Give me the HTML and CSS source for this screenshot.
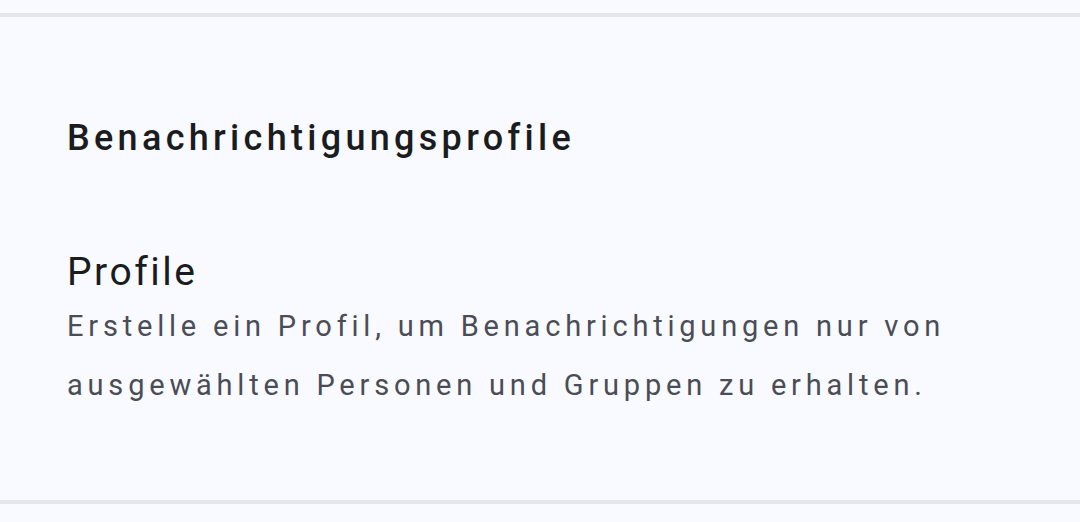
FILE: index.html
```html
<!DOCTYPE html>
<html lang="de">
<head>
<meta charset="utf-8">
<link rel="stylesheet" href="styles.css">
</head>
<body>
<div class="page">
  <div class="spacer-top"></div>
  <div class="divider"></div>
  <section class="section">
    <h2 class="section-title">Benachrichtigungsprofile</h2>
    <div class="item">
      <div class="item-title">Profile</div>
      <div class="item-summary">Erstelle ein Profil, um Benachrichtigungen nur von ausgewählten Personen und Gruppen zu erhalten.</div>
    </div>
  </section>
  <div class="divider"></div>
</div>
</body>
</html>
```
FILE: styles.css
```css
html, body {
  margin: 0;
  padding: 0;
  background: #f9faff;
}
body {
  font-family: Roboto, "Noto Sans", sans-serif;
  width: 1080px;
  height: 522px;
  overflow: hidden;
}
.page {
  display: flex;
  flex-direction: column;
}
.spacer-top {
  height: 13px;
}
.divider {
  height: 4px;
  background: #e5e6eb;
}
.section {
  height: 483px;
  box-sizing: border-box;
  padding: 0 40px 0 67px;
  display: flex;
  flex-direction: column;
}
.section-title {
  margin: 0;
  margin-top: 96px;
  font-size: 36px;
  line-height: 50px;
  font-weight: 500;
  color: #1b1c20;
  letter-spacing: 4.3px;
}
.item {
  margin-top: 84px;
}
.item-title {
  font-size: 39px;
  line-height: 50px;
  color: #1b1c20;
  letter-spacing: 2.5px;
}
.item-summary {
  font-size: 29px;
  line-height: 59px;
  color: #4a4d56;
  letter-spacing: 4.8px;
}
```
